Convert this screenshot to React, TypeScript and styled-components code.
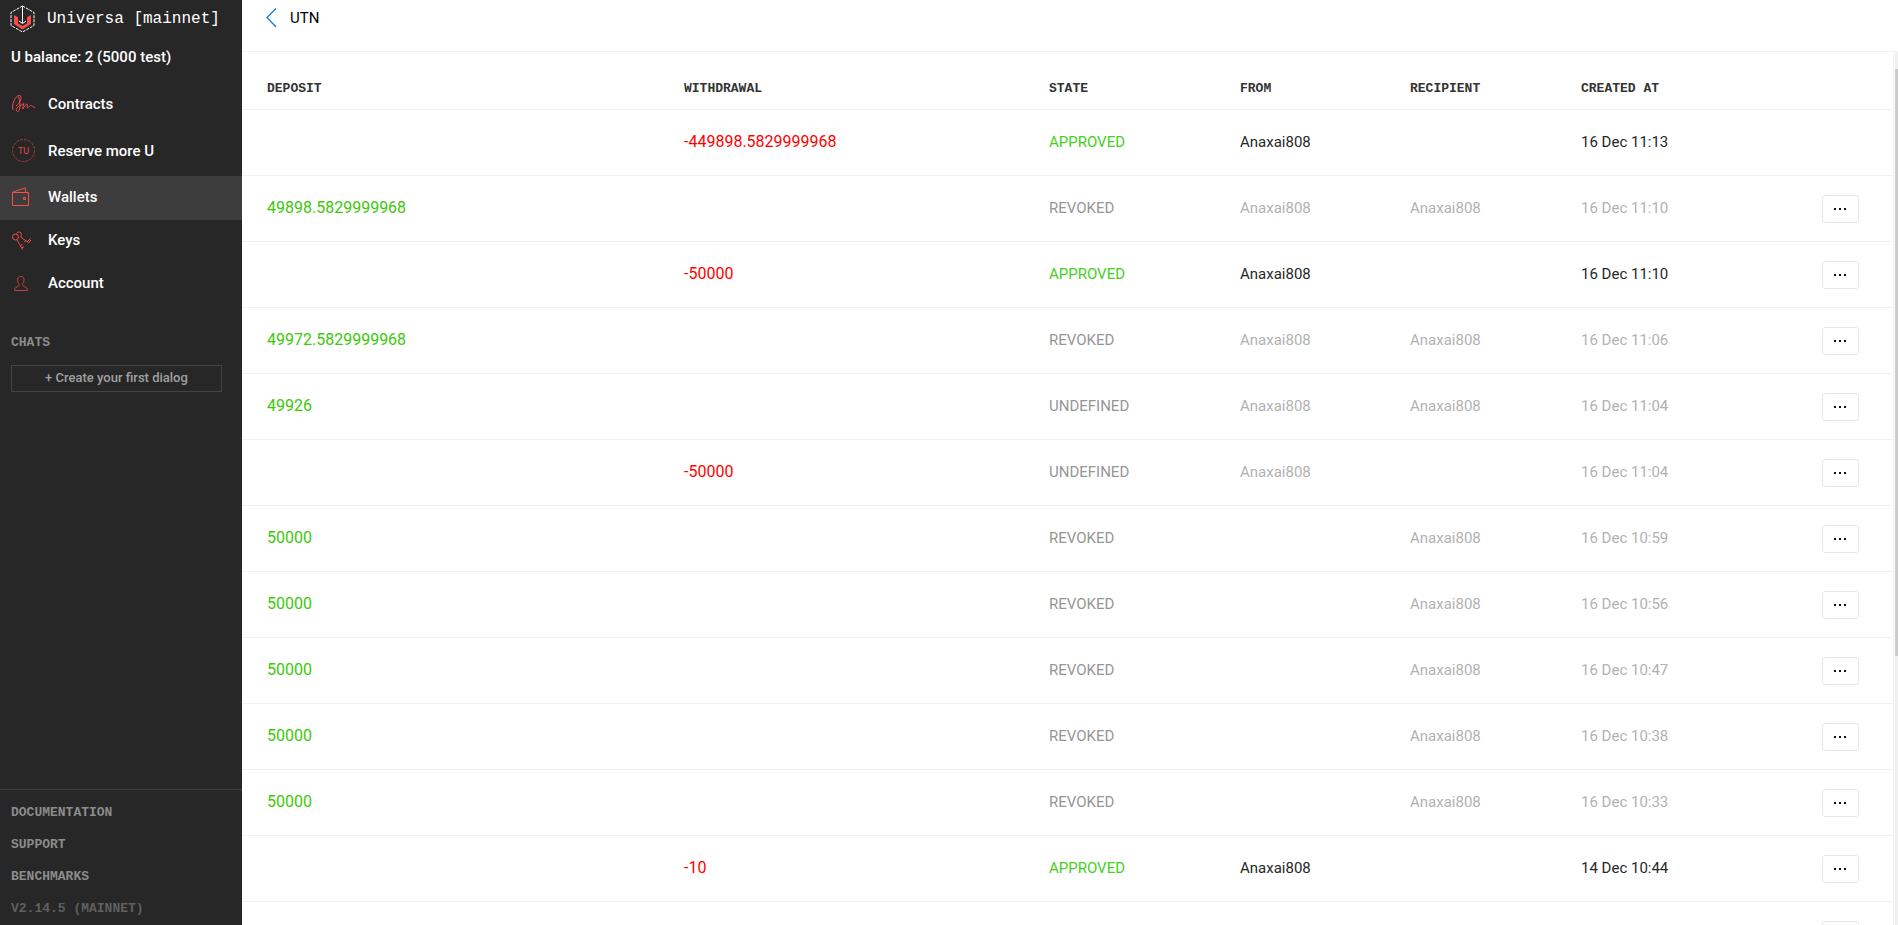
import React from "react";
import styled, { createGlobalStyle, css } from "styled-components";

const sans = `Roboto, "Liberation Sans", sans-serif`;
const mono = `"Liberation Mono", monospace`;

const GlobalStyle = createGlobalStyle`
  * { box-sizing: border-box; }
  body { margin: 0; background: #fff; font-family: ${sans}; font-size: 15px; color: #272727; }
`;

const Layout = styled.div`
  display: flex;
  height: 100vh;
  overflow: hidden;
`;

/* Sidebar */

const Sidebar = styled.aside`
  display: flex;
  flex-direction: column;
  flex: 0 0 242px;
  background: #272727;
  color: #fff;
`;

const Brand = styled.div`
  display: flex;
  align-items: center;
  gap: 12px;
  height: 37px;
  padding-left: 10px;
  font: 400 16px/20px ${mono};
`;

const Balance = styled.div`
  padding: 10px 11px 0;
  font-weight: 500;
  line-height: 20px;
`;

const Nav = styled.nav`
  display: flex;
  flex-direction: column;
  margin-top: 15px;
`;

const NavLink = styled.a<{ $active?: boolean }>`
  display: flex;
  align-items: center;
  padding: 11px 12px 13px;
  background: ${(p) => (p.$active ? "#3d3d3d" : "transparent")};
  color: #fff;
  font-weight: 500;
  line-height: 19px;
  text-decoration: none;
`;

const IconSlot = styled.span`
  display: flex;
  align-items: center;
  flex: 0 0 36px;
`;

const Chats = styled.section`
  display: flex;
  flex-direction: column;
  gap: 12px;
  padding: 27px 20px 0 11px;
`;

const ChatsTitle = styled.h2`
  margin: 0;
  color: #8c8c8c;
  font: 700 13px/20px ${mono};
`;

const CreateDialog = styled.button`
  height: 27px;
  padding: 0 0 2px;
  border: 1px solid #444;
  background: transparent;
  color: #a0a0a0;
  font: 500 13px/20px ${sans};
`;

const SideFooter = styled.footer`
  display: flex;
  flex-direction: column;
  margin-top: auto;
  padding: 7px 11px 0;
  border-top: 1px solid #3d3d3d;
  color: #606060;
  font: 700 13px/32px ${mono};
`;

const FooterLink = styled.a`
  color: #8c8c8c;
  text-decoration: none;
`;

/* Main area */

const Main = styled.main`
  display: flex;
  flex-direction: column;
  flex: 1;
  min-width: 0;
`;

const TopBar = styled.header`
  flex: 0 0 52px;
  padding: 8px 24px;
  border-bottom: 1px solid #f2f2f2;
`;

const BackLink = styled.a`
  display: inline-flex;
  align-items: center;
  gap: 13px;
  color: #000;
  line-height: 20px;
  text-decoration: none;
`;

const Content = styled.div`
  display: flex;
  flex: 1;
  min-height: 0;
`;

const Scroller = styled.div`
  flex: 1;
  min-width: 0;
  overflow-y: auto;
  scrollbar-width: none;
  border-right: 1px solid #f2f2f2;
`;

const ScrollTrack = styled.div`
  display: flex;
  flex-direction: column;
  flex: 0 0 3px;
  margin-left: 1px;
  padding: 17px 0;
  background: #f0f0f0;
`;

const ScrollThumb = styled.div`
  height: 70%;
  background: #cbcbcb;
`;

const Table = styled.table`
  width: 100%;
  table-layout: fixed;
  border-collapse: separate;
  border-spacing: 0;
`;

const Col = styled.col<{ $w: number }>`
  width: ${(p) => p.$w}px;
`;

const Th = styled.th`
  height: 58px;
  padding: 16px 0 0 25px;
  border-bottom: 1px solid #f2f2f2;
  color: #333;
  font: 700 13px/20px ${mono};
  text-align: left;
`;

type Tone = "deposit" | "withdrawal" | "approved" | "state" | "dark" | "muted";

const tones: Record<Tone, string> = {
  deposit: "#3cc80a",
  withdrawal: "#ff0000",
  approved: "#45d01c",
  state: "#969696",
  dark: "#272727",
  muted: "#b2b2b2",
};

const Td = styled.td<{ $tone: Tone }>`
  height: 66px;
  padding: 0 0 2px 25px;
  border-bottom: 1px solid #f2f2f2;
  color: ${(p) => tones[p.$tone]};
  line-height: 20px;
  ${(p) =>
    (p.$tone === "deposit" || p.$tone === "withdrawal") &&
    css`
      font-size: 16px;
    `}
`;

const ActionCell = styled.td`
  height: 66px;
  padding: 0 34px 0 0;
  border-bottom: 1px solid #f2f2f2;
  text-align: right;
`;

const MoreButton = styled.button`
  display: inline-flex;
  align-items: center;
  justify-content: center;
  width: 37px;
  height: 28px;
  padding: 0;
  border: 1px solid #e8e8e8;
  border-radius: 3px;
  background: #fff;
  vertical-align: middle;
`;

/* Icons */

const Logo = () => (
  <svg width="25" height="28" viewBox="0 0 25 28" fill="none" aria-hidden="true">
    <path d="M12.5 1 24 7.5v13L12.5 27 1 20.5v-13z" stroke="#fff" strokeDasharray="3 1" />
    <path d="M4 10l4 2.300v6.200l4.500 2.500 4.500-2.500v-6.200l4-2.300v9l-8.500 5.500L4 19z" fill="#fb4b4b" />
    <path d="M12.500 1v17M9 16l3.500 2.500L16 16" stroke="#fff" />
  </svg>
);

const ContractsIcon = () => (
  <svg width="24" height="22" viewBox="0 0 24 22" fill="none" stroke="#f04b4b" aria-hidden="true">
    <path d="M1 17C-.5 12 2.500 3.500 7 2.500c3-.5 2.500 4 0 7.500-1 1.500-2 2.200-3 3M6.500 3.500c1.500 4 2 9 1 13-.8 2.500-3.500 2.500-3.200 0C4.700 14 8 12.500 12 10.500c-1 2-1.500 4-1 5.500 1-2.500 2.500-4.500 4-5 .8 1.200-.5 3 .5 4 1.500-.5 2.500-3 4-2.500 1.200.5 1 1.500 3.500 2" />
  </svg>
);

const CoinLabel = styled.text`
  fill: #e04646;
  font: 400 9px ${sans};
`;

const CoinIcon = () => (
  <svg width="24" height="24" viewBox="0 0 24 24" fill="none" aria-hidden="true">
    <circle cx="11.500" cy="11.500" r="11" stroke="#a83c3c" strokeDasharray="3 1" />
    <CoinLabel x="11.500" y="15" textAnchor="middle">TU</CoinLabel>
  </svg>
);

const WalletIcon = () => (
  <svg width="18" height="20" viewBox="0 0 18 20" fill="none" stroke="#fb4b4b" aria-hidden="true">
    <path d="M.5 5.500h16v13H.5zM1 5 13.500.800V5M11.500 10.500h2v2h-2z" />
  </svg>
);

const KeysIcon = () => (
  <svg width="20" height="19" viewBox="0 0 20 19" fill="none" stroke="#f04b4b" aria-hidden="true">
    <circle cx="3.500" cy="6" r="3" />
    <path d="M5 9l5.500 9.500M8.500 14.500l2-1M9.500 17l2.500-1.300M4.500 2.500C5 .8 8 .2 9 2c.8 1.500.5 3-.5 4l8 5.500M13.500 9.500l-1 1.700M15 11l3.500-3.500M16.500 12l2.500-3" />
  </svg>
);

const AccountIcon = () => (
  <svg width="18" height="19" viewBox="0 0 18 19" fill="none" stroke="#c84039" aria-hidden="true">
    <path d="M6.500 9C5 7 4.800 2.500 8.800 2.500S12.500 7 11 9c-.5 1-.8 2.800.5 3.300 2 .8 4 1.200 4 4.200h-13c0-3 2-3.400 4-4.200C7.300 11.800 7 10 6.500 9z" />
  </svg>
);

const BackIcon = () => (
  <svg width="11" height="20" viewBox="0 0 11 20" fill="none" stroke="#0a7fe0" strokeWidth="1.300" aria-hidden="true">
    <path d="M10 .5 1 9.500l9 9.500" />
  </svg>
);

const DotsIcon = () => (
  <svg width="14" height="2" viewBox="0 0 14 2" fill="#111" aria-hidden="true">
    <path d="M0 0h2v2H0zM5 0h2v2H5zM10 0h2v2h-2z" />
  </svg>
);

const navItems = [
  { label: "Contracts", icon: <ContractsIcon /> },
  { label: "Reserve more U", icon: <CoinIcon /> },
  { label: "Wallets", icon: <WalletIcon />, active: true },
  { label: "Keys", icon: <KeysIcon /> },
  { label: "Account", icon: <AccountIcon /> },
];

const columns = [
  { title: "DEPOSIT", width: 417 },
  { title: "WITHDRAWAL", width: 365 },
  { title: "STATE", width: 191 },
  { title: "FROM", width: 170 },
  { title: "RECIPIENT", width: 171 },
  { title: "CREATED AT", width: 217 },
];

interface Transaction {
  amount: string;
  state: string;
  from?: string;
  recipient?: string;
  date: string;
  locked?: boolean;
}

const user = "Anaxai808";

const transactions: Transaction[] = [
  { amount: "-449898.5829999968", state: "APPROVED", from: user, date: "16 Dec 11:13", locked: true },
  { amount: "49898.5829999968", state: "REVOKED", from: user, recipient: user, date: "16 Dec 11:10" },
  { amount: "-50000", state: "APPROVED", from: user, date: "16 Dec 11:10" },
  { amount: "49972.5829999968", state: "REVOKED", from: user, recipient: user, date: "16 Dec 11:06" },
  { amount: "49926", state: "UNDEFINED", from: user, recipient: user, date: "16 Dec 11:04" },
  { amount: "-50000", state: "UNDEFINED", from: user, date: "16 Dec 11:04" },
  { amount: "50000", state: "REVOKED", recipient: user, date: "16 Dec 10:59" },
  { amount: "50000", state: "REVOKED", recipient: user, date: "16 Dec 10:56" },
  { amount: "50000", state: "REVOKED", recipient: user, date: "16 Dec 10:47" },
  { amount: "50000", state: "REVOKED", recipient: user, date: "16 Dec 10:38" },
  { amount: "50000", state: "REVOKED", recipient: user, date: "16 Dec 10:33" },
  { amount: "-10", state: "APPROVED", from: user, date: "14 Dec 10:44" },
  { amount: "", state: "", date: "" },
];

const TransactionRow = ({ tx }: { tx: Transaction }) => {
  const approved = tx.state === "APPROVED";
  const outgoing = tx.amount.startsWith("-");
  const text: Tone = approved ? "dark" : "muted";
  return (
    <tr>
      <Td $tone="deposit">{outgoing ? "" : tx.amount}</Td>
      <Td $tone="withdrawal">{outgoing ? tx.amount : ""}</Td>
      <Td $tone={approved ? "approved" : "state"}>{tx.state}</Td>
      <Td $tone={text}>{tx.from}</Td>
      <Td $tone={text}>{tx.recipient}</Td>
      <Td $tone={text}>{tx.date}</Td>
      <ActionCell>
        {!tx.locked && (
          <MoreButton type="button" aria-label="More actions">
            <DotsIcon />
          </MoreButton>
        )}
      </ActionCell>
    </tr>
  );
};

export default function App() {
  return (
    <>
      <GlobalStyle />
      <Layout>
        <Sidebar>
          <Brand>
            <Logo />
            Universa [mainnet]
          </Brand>
          <Balance>U balance: 2 (5000 test)</Balance>
          <Nav>
            {navItems.map((item) => (
              <NavLink key={item.label} href="#" $active={item.active}>
                <IconSlot>{item.icon}</IconSlot>
                {item.label}
              </NavLink>
            ))}
          </Nav>
          <Chats>
            <ChatsTitle>CHATS</ChatsTitle>
            <CreateDialog type="button">+ Create your first dialog</CreateDialog>
          </Chats>
          <SideFooter>
            <FooterLink href="#">DOCUMENTATION</FooterLink>
            <FooterLink href="#">SUPPORT</FooterLink>
            <FooterLink href="#">BENCHMARKS</FooterLink>
            <span>V2.14.5 (MAINNET)</span>
          </SideFooter>
        </Sidebar>
        <Main>
          <TopBar>
            <BackLink href="#">
              <BackIcon />
              UTN
            </BackLink>
          </TopBar>
          <Content>
            <Scroller>
              <Table>
                <colgroup>
                  {columns.map((c) => (
                    <Col key={c.title} $w={c.width} />
                  ))}
                  <Col $w={120} />
                </colgroup>
                <thead>
                  <tr>
                    {columns.map((c) => (
                      <Th key={c.title} scope="col">{c.title}</Th>
                    ))}
                    <Th />
                  </tr>
                </thead>
                <tbody>
                  {transactions.map((tx, i) => (
                    <TransactionRow key={i} tx={tx} />
                  ))}
                </tbody>
              </Table>
            </Scroller>
            <ScrollTrack>
              <ScrollThumb />
            </ScrollTrack>
          </Content>
        </Main>
      </Layout>
    </>
  );
}
